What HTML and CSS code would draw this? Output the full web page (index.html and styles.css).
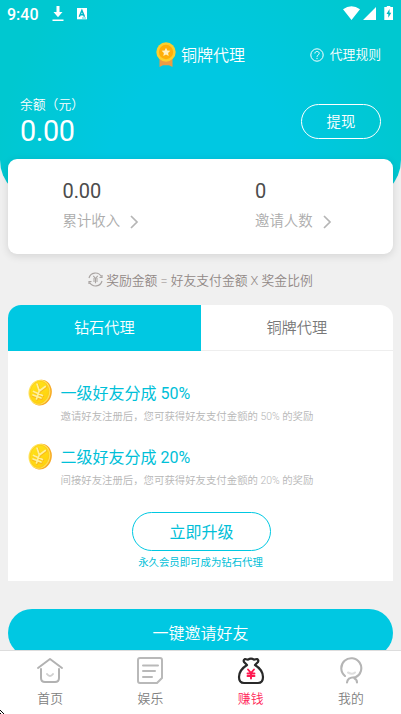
FILE: index.html
```html
<!DOCTYPE html>
<html lang="zh-CN">
<head>
<meta charset="utf-8">
<title>代理</title>
<link rel="stylesheet" href="styles.css">
</head>
<body>
<svg class="defs" width="0" height="0">
  <defs>
    <linearGradient id="gold" x1="0" y1="0" x2="1" y2="1"><stop offset="0" stop-color="#ffe51c"/><stop offset="1" stop-color="#ffcf0b"/></linearGradient>
    <symbol id="coin" viewBox="0 0 24 27">
      <ellipse cx="12.700" cy="13.700" rx="11" ry="13" transform="rotate(14 12.7 13.7)" fill="#f8ab26"/>
      <ellipse cx="11.400" cy="13.200" rx="10.800" ry="12.600" transform="rotate(14 11.4 13.2)" fill="#ffe45c"/>
      <ellipse cx="11.400" cy="13.300" rx="9.300" ry="11.300" transform="rotate(14 11.4 13.3)" fill="url(#gold)" stroke="#fdc816" stroke-width=".7"/>
      <path d="M9.500 5.500l2.300 7 6-4.500M11.500 13l-2.500 7.500M6 13l9 4M5 16.800l8.500 3" fill="none" stroke="#f9b81e" stroke-width="2.400" stroke-linecap="round"/>
      <path d="M9 5l2.300 7 6-4.500M11 12.500l-2.500 7.500M5.500 12.500l9 4M5 16l8 3" fill="none" stroke="#fff29b" stroke-width="1.700" stroke-linecap="round"/>
    </symbol>
  </defs>
</svg>
<div class="screen">
  <main class="content">
    <header class="hero">
      <div class="status">
        <span class="clock">9:40</span>
        <svg class="download" width="12" height="16" viewBox="0 0 12 16"><path d="M4.500 0h3v6h3L6 11.200 1.500 6h3zM.5 13.500h11V15H.5z" fill="#fff"/></svg>
        <svg class="lang" width="10" height="12" viewBox="0 0 10 12"><path d="M0 0h10v11.300H0z" fill="#fff"/><path d="M2.300 8.700L4.900 2.400l2.600 6.300M3.300 6.700h3.200" fill="none" stroke="#00b8c8" stroke-width="1.500"/><path d="M5 10h4" stroke="#00b8c8" stroke-width=".7"/></svg>
        <svg class="signals" width="51" height="16" viewBox="0 0 51 16" fill="#fff"><path d="M0 3.200Q8.500-2.800 17 3.200L8.500 14zM20 14L33 1v13zM43.800-.5h3.500V1H50v13h-8.700V1h2.500z"/><path d="M46.500 3l-3 5h1.800v3.700l3-5h-1.800z" fill="#00b8c0"/></svg>
      </div>
      <div class="titlebar">
        <div class="title">
          <svg width="20" height="26" viewBox="0 0 20 26"><path d="M3.500 16h13v9l-3.500-1.800h-6L3.500 25z" fill="#ed9b43"/><circle cx="10" cy="10" r="9.700" fill="#fdcf2d"/><circle cx="10" cy="10" r="7.200" fill="#ffae08"/><path d="M10 5.700l1.300 2.700 3 .4-2.200 2.100.6 3-2.700-1.400-2.700 1.400.6-3-2.200-2.100 3-.4z" fill="#fff1c4"/></svg>
          <span>铜牌代理</span>
        </div>
        <div class="rules">
          <svg width="14" height="14" viewBox="0 0 14 14" fill="none" stroke="#fff"><circle cx="7" cy="7" r="6.200"/><path d="M4.900 5.500c0-2.700 4.300-2.700 4.300 0C9.200 7 7 7 7 8.800M7 9.900v1.200"/></svg>
          <span>代理规则</span>
        </div>
      </div>
      <div class="wallet">
        <div><div class="caption">余额（元）</div><div class="balance">0.00</div></div>
        <button class="withdraw">提现</button>
      </div>
    </header>
    <section class="stats">
      <div class="stat"><div class="value">0.00</div><div class="label">累计收入<svg width="9" height="14" viewBox="0 0 9 14"><path d="M1 1L7 7l-6 6" fill="none" stroke="#b5b5b5" stroke-width="1.700"/></svg></div></div>
      <div class="stat"><div class="value">0</div><div class="label">邀请人数<svg width="9" height="14" viewBox="0 0 9 14"><path d="M1 1L7 7l-6 6" fill="none" stroke="#b5b5b5" stroke-width="1.700"/></svg></div></div>
    </section>
    <div class="formula">
      <svg width="15" height="15" viewBox="0 0 15 15" fill="none" stroke="#aaa5a3"><path d="M1 6A6.600 6.600 0 0 1 13.200 4.500M14 9A6.600 6.600 0 0 1 1.800 10.500M14 3V5.500H11.500M1 12V9.500H3.500" stroke-width="1.200"/><path d="M5.300 3.800l2.200 2.700 2.200-2.700M7.500 6.500v4.800M5 7h5M5 9h5" stroke-width="1.100"/></svg>
      <span>奖励金额 = 好友支付金额 X 奖金比例</span>
    </div>
    <section class="plan">
      <div class="tabs"><div class="tab active">钻石代理</div><div class="tab">铜牌代理</div></div>
      <div class="benefits">
        <div class="benefit"><svg width="24" height="27"><use href="#coin"/></svg><div><h3>一级好友分成 50%</h3><p>邀请好友注册后，您可获得好友支付金额的 50% 的奖励</p></div></div>
        <div class="benefit"><svg width="24" height="27"><use href="#coin"/></svg><div><h3>二级好友分成 20%</h3><p>间接好友注册后，您可获得好友支付金额的 20% 的奖励</p></div></div>
      </div>
      <button class="upgrade">立即升级</button>
      <div class="note">永久会员即可成为钻石代理</div>
    </section>
    <button class="invite">一键邀请好友</button>
  </main>
  <nav class="nav">
    <a class="item"><svg width="28" height="28" viewBox="0 0 28 28" fill="none" stroke="#b2b2b2" stroke-width="2" stroke-linecap="round" stroke-linejoin="round"><path d="M2 11L14 2l12 9M5 12v9q0 4 4 4h10q4 0 4-4v-9"/><path d="M11 17q3 4 6 0" stroke="#d0d0d0"/></svg><span>首页</span></a>
    <a class="item"><svg width="28" height="28" viewBox="0 0 28 28" fill="none" stroke="#b9b9b9" stroke-width="2" stroke-linecap="round" stroke-linejoin="round"><path d="M4 1h20q2 0 2 2v18l-5 5H4q-2 0-2-2V3q0-2 2-2zM7 8.500h15M7 14h12M7 20h9"/></svg><span>娱乐</span></a>
    <a class="item current"><svg width="28" height="28" viewBox="0 0 28 28" fill="none" stroke="#292929" stroke-width="2.200" stroke-linecap="round" stroke-linejoin="round"><path d="M10 8L7 5q-1-2 1-3l3 .7Q14 .5 17 2.700L20 2q2 1 1 3l-3 3M10 8Q2 13 2 20q0 6 5 6h14q5 0 5-6 0-7-8-12"/><path d="M11 12.500l3 3.500 3-3.500M14 16.500V21.500M10.500 16.500h7M10.500 19h7" stroke="#ff1950" stroke-width="1.900"/></svg><span>赚钱</span></a>
    <a class="item"><svg width="28" height="28" viewBox="0 0 28 28" fill="none" stroke="#b5b5b5" stroke-width="2.100" stroke-linecap="round"><path d="M8 19A10 10 0 1 1 18.500 20.300Q10.500 20 10 25.500M17.500 21.500Q20 22.500 20 25.500"/><path d="M11 15.500q4 2.500 7 0" stroke="#dedede"/></svg><span>我的</span></a>
    <svg class="cursor" width="4" height="4" viewBox="0 0 4 4" shape-rendering="crispEdges"><path d="M0 0h1v1H0zM1 1h1v1H1zM2 2h1v1H2zM3 3h1v1H3zM0 3h1v1H0z"/></svg>
  </nav>
</div>
</body>
</html>
```
FILE: styles.css
```css
* { box-sizing: border-box; }
body {
  margin: 0;
  font-family: Roboto, "Noto Sans CJK SC", sans-serif;
  font-weight: 350;
  background: #f0f0f0;
}
svg { display: block; flex: none; }
button { font: inherit; padding: 0 0 2px; }
h3, p { margin: 0; font-weight: inherit; }
.defs { position: absolute; }
.screen { height: 714px; display: flex; flex-direction: column; overflow: hidden; }
.content { height: 651px; flex: none; overflow: hidden; }
.hero {
  height: 200px;
  color: #fff;
  border-radius: 0 0 40px 40px;
  background: radial-gradient(ellipse 220px 290px at 201px 200px, #00c8e2 0 45%, #00c8d0 95%);
}
.status { height: 28px; display: flex; align-items: flex-start; padding: 6px 7px 0; }
.clock { width: 45px; font-size: 16px; line-height: 17px; font-weight: 500; }
.lang { margin: 2px 0 0 13px; }
.signals { margin-left: auto; }
.titlebar { height: 54px; display: grid; grid-template-columns: 1fr auto 1fr; align-items: center; }
.title { grid-column: 2; display: flex; align-items: center; gap: 5px; font-size: 16px; }
.title span { padding-bottom: 2px; }
.rules { display: flex; align-items: center; justify-content: flex-end; gap: 6px; padding-right: 20px; font-size: 12.8px; line-height: 16px; }
.wallet { display: flex; justify-content: space-between; padding: 13px 20px 0; }
.caption { font-size: 12.8px; line-height: 20px; }
.balance { font-size: 28.800px; line-height: 32px; font-weight: 400; letter-spacing: -.4px; }
.withdraw { width: 80px; height: 35px; margin-top: 9px; border: 1px solid #fff; border-radius: 18px; background: none; color: #fff; font-size: 14.4px; }
.stats {
  position: relative;
  height: 95px;
  margin: -41px 8px 0;
  padding-top: 20px;
  display: grid;
  grid-template-columns: 1fr 1fr;
  border-radius: 9px;
  background: #fff;
  box-shadow: 0 2px 8px rgba(0, 0, 0, .12);
}
.stat { padding-left: 54.500px; }
.value { color: #4c4c4c; font-size: 20px; line-height: 24px; letter-spacing: -.1px; font-weight: 400; }
.label { display: flex; align-items: center; gap: 10px; margin-top: 7px; color: #acacac; font-size: 14.4px; line-height: 23px; }
.formula { height: 51px; display: flex; align-items: center; justify-content: center; gap: 3px; color: #918886; font-size: 12.8px; }
.plan { height: 276px; margin: 0 8px; background: #fff; border-radius: 13px 13px 0 0; overflow: hidden; text-align: center; }
.tabs { height: 46px; display: flex; font-size: 15.200px; line-height: 46px; color: #787878; }
.tab { flex: 1; border-bottom: 1px solid #eee; }
.tab.active { background: #00c8e2; border-color: #00c8e2; color: #fff; }
.benefits { height: 161px; padding: 28px 20px 0; text-align: left; }
.benefit { height: 64px; display: flex; gap: 8.500px; }
.benefit h3 { color: #00c0d8; font-size: 16px; line-height: 29px; font-weight: 400; }
.benefit p { color: #b6b6b6; font-size: 10.400px; line-height: 18px; }
.upgrade { width: 139px; height: 39px; border: 1px solid #00c8e2; border-radius: 20px; background: #fff; color: #00c0d8; font-size: 16px; display: block; margin: 0 auto; position: relative; left: 1px; font-weight: 400; }
.note { color: #00c0d8; font-size: 10.400px; line-height: 23px; font-weight: 400; }
.invite { display: block; width: 385px; height: 48px; margin: 28px 8px 0; border: 0; border-radius: 24px; background: #00c8e2; color: #fff; font-size: 16px; }
.nav { position: relative; height: 64px; flex: none; display: flex; border-top: 1px solid #ddd; margin-top: -1px; background: #fff; }
.item { flex: 1; display: flex; flex-direction: column; align-items: center; padding-top: 6px; color: #808080; font-size: 12.800px; }
.item span { line-height: 20px; margin-top: 4px; }
.item.current { color: #ff2456; }
.cursor { position: absolute; left: 0; bottom: 0; }
```
